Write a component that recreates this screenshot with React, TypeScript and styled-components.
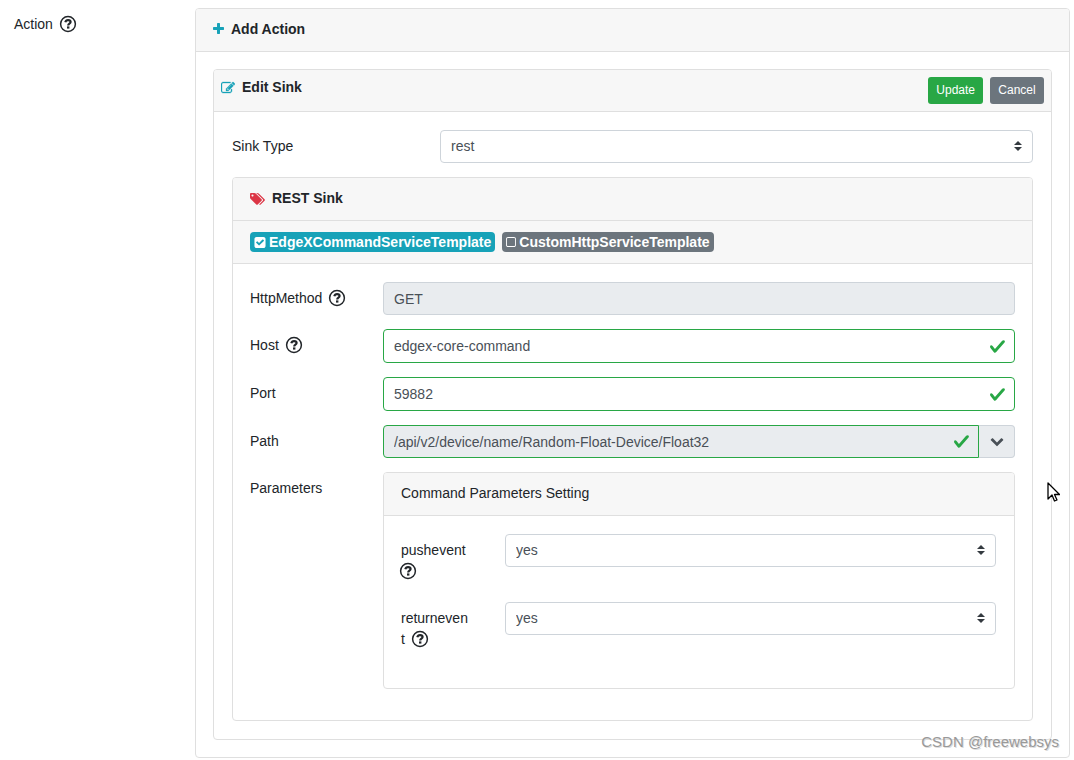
import React, { useState } from "react";
import styled, { createGlobalStyle } from "styled-components";

const GlobalStyle = createGlobalStyle`
  *, *::before, *::after { box-sizing: border-box; }
  body {
    margin: 0;
    background: #fff;
    color: #212529;
    font-family: "Liberation Sans", Arial, sans-serif;
    font-size: 14px;
    line-height: 21px;
  }
  button, input, select { font: inherit; margin: 0; }
`;

/* ---------- layout ---------- */

const Page = styled.main`
  position: relative;
  display: grid;
  grid-template-columns: 181px minmax(0, 1fr);
  align-items: start;
  padding: 8px 4px 0 14px;
`;

const Card = styled.section`
  min-width: 0;
  border: 1px solid #dfdfdf;
  border-radius: 4px;
  background: #fff;
`;

const CardHeader = styled.header<{ $compact?: boolean }>`
  display: flex;
  align-items: flex-start;
  gap: 7px;
  min-height: ${(p) => (p.$compact ? 42 : 43)}px;
  padding: ${(p) => (p.$compact ? "7px" : "10px 17px")};
  border-bottom: 1px solid #dfdfdf;
  background: #f7f7f7;

  &:first-child { border-radius: 3px 3px 0 0; }
`;

const CardTitle = styled.h2<{ $plain?: boolean }>`
  display: flex;
  align-items: center;
  gap: 7px;
  flex: 1;
  margin: 0;
  font-size: 14px;
  font-weight: ${(p) => (p.$plain ? 400 : 700)};
`;

const CardBody = styled.div<{ $pad: string }>`
  padding: ${(p) => p.$pad};
`;

const FormRow = styled.div<{ $label: number }>`
  display: grid;
  grid-template-columns: ${(p) => p.$label}px minmax(0, 1fr);
  align-items: start;
  margin-bottom: 14px;
`;

const labelBox = `
  display: block;
  padding: 6px 0;
`;

const Label = styled.label<{ $narrow?: boolean }>`
  ${labelBox}
  padding-right: ${(p) => (p.$narrow ? 34 : 0)}px;
  overflow-wrap: anywhere;
`;

const Caption = styled.div`
  ${labelBox}
`;

/* ---------- controls ---------- */

const Control = styled.div`
  position: relative;
  flex: 1;
  display: flex;
  min-width: 0;
`;

const Input = styled.input<{ $valid?: boolean; $joined?: boolean }>`
  width: 100%;
  height: ${(p) => (p.readOnly ? 33 : 34)}px;
  padding: 0 10px;
  border: 1px solid ${(p) => (p.$valid ? "#28a745" : "#ced4da")};
  border-radius: ${(p) => (p.$joined ? "4px 0 0 4px" : "4px")};
  background: ${(p) => (p.readOnly ? "#e9ecef" : "#fff")};
  color: #495057;
  outline: none;
`;

const Select = styled.select`
  appearance: none;
  width: 100%;
  height: 33px;
  padding: 0 24px 0 10px;
  border: 1px solid #ced4da;
  border-radius: 4px;
  background: #fff;
  color: #495057;
  outline: none;
`;

const Adornment = styled.svg`
  position: absolute;
  top: 0;
  margin: auto 0;
  pointer-events: none;
`;

const SelectArrows = styled(Adornment)`
  right: 11px;
  bottom: 1px;
`;

const ValidTick = styled(Adornment)`
  right: 9px;
  bottom: 0;
`;

const InputGroup = styled.div`
  display: flex;
`;

const AddonButton = styled.button`
  display: flex;
  align-items: center;
  justify-content: center;
  width: 36px;
  height: 33px;
  padding: 0;
  border: 1px solid #ced4da;
  border-left: 0;
  border-radius: 0 4px 4px 0;
  background: #e9ecef;
  color: #495057;
`;

const Button = styled.button<{ $tone: string }>`
  min-width: 54px;
  height: 27px;
  padding: 0 8px;
  border: 0;
  border-radius: 3px;
  background: ${(p) => p.$tone};
  color: #fff;
  font-size: 12px;
`;

const BadgeRow = styled.div`
  display: flex;
  align-items: center;
  gap: 7px;
  min-height: 43px;
  padding: 0 17px;
  border-bottom: 1px solid #dfdfdf;
  background: #f7f7f7;
`;

const Badge = styled.label<{ $on: boolean }>`
  position: relative;
  display: inline-flex;
  align-items: center;
  gap: 3px;
  height: 20px;
  padding: 0 4px;
  border-radius: 4px;
  background: ${(p) => (p.$on ? "#17a2b8" : "#6c757d")};
  color: #fff;
  font-weight: 700;
`;

const BadgeCheck = styled.input`
  position: absolute;
  left: 4px;
  width: 12px;
  height: 12px;
  opacity: 0;
`;

const HelpMark = styled.svg`
  width: 16px;
  height: 16px;
  margin-left: -1px;
  vertical-align: -3px;
  overflow: visible;
`;

const Watermark = styled.div`
  position: absolute;
  right: 15px;
  bottom: 6px;
  color: #999;
  font-size: 15px;
  text-shadow: 1px 1px 0 #ddd;
`;

const Cursor = styled.svg`
  position: absolute;
  top: 482px;
  right: 14px;
`;

/* ---------- icons ---------- */

const Glyph = styled.svg<{ $color?: string }>`
  flex: none;
  fill: ${(p) => p.$color ?? "currentColor"};
`;

const PlusIcon = () => (
  <Glyph $color="#17a2b8" width="11" height="13" viewBox="192 128 1408 1664" aria-hidden>
    <path d="M1600 736v192q0 40-28 68t-68 28h-416v416q0 40-28 68t-68 28h-192q-40 0-68-28t-28-68v-416h-416q-40 0-68-28t-28-68v-192q0-40 28-68t68-28h416v-416q0-40 28-68t68-28h192q40 0 68 28t28 68v416h416q40 0 68 28t28 68z" />
  </Glyph>
);

const EditIcon = () => (
  <Glyph $color="#17a2b8" width="14" height="14" viewBox="0 0 1792 1792" aria-hidden>
    <path
      stroke="#17a2b8"
      strokeWidth="40"
      d="M888 1184l116-116-152-152-116 116v56h96v96h56zm440-720q-16-16-33 1l-350 350q-17 17-1 33t33-1l350-350q17-17 1-33zm80 594v190q0 119-84.5 203.5t-203.5 84.5h-832q-119 0-203.5-84.5t-84.5-203.5v-832q0-119 84.5-203.5t203.5-84.5h832q63 0 117 25 15 7 18 23 3 17-9 29l-49 49q-14 14-32 8-23-6-45-6h-832q-66 0-113 47t-47 113v832q0 66 47 113t113 47h832q66 0 113-47t47-113v-126q0-13 9-22l64-64q15-15 35-7t20 29zm-96-738l288 288-672 672h-288v-288zm444 132l-92 92-288-288 92-92q28-28 68-28t68 28l152 152q28 28 28 68t-28 68z"
    />
  </Glyph>
);

const TagsIcon = () => (
  <Glyph $color="#dc3545" width="15" height="14" viewBox="128 0 1920 1792" aria-hidden>
    <path d="M576 448q0-53-37.5-90.5t-90.5-37.5-90.5 37.5-37.5 90.5 37.5 90.5 90.5 37.5 90.5-37.5 37.5-90.5zm1067 576q0 53-37 90l-491 492q-39 37-91 37-53 0-90-37l-715-716q-38-37-64.5-101t-26.5-117v-416q0-52 38-90t90-38h416q53 0 117 26.5t102 64.5l715 714q37 39 37 91zm384 0q0 53-37 90l-491 492q-39 37-91 37-36 0-59-14t-53-45l470-470q37-37 37-90 0-52-37-91l-715-714q-38-38-102-64.5t-117-26.5h224q53 0 117 26.5t102 64.5l715 714q37 39 37 91z" />
  </Glyph>
);

const CheckedIcon = () => (
  <Glyph width="12" height="12" viewBox="64 0 1664 1664" aria-hidden>
    <path d="M813 1299l614-614q19-19 19-45t-19-45l-102-102q-19-19-45-19t-45 19l-467 467-211-211q-19-19-45-19t-45 19l-102 102q-19 19-19 45t19 45l358 358q19 19 45 19t45-19zm851-883v960q0 119-84.5 203.5t-203.5 84.5h-960q-119 0-203.5-84.5t-84.5-203.5v-960q0-119 84.5-203.5t203.5-84.5h960q119 0 203.5 84.5t84.5 203.5z" />
  </Glyph>
);

const UncheckedIcon = () => (
  <Glyph width="10" height="10" viewBox="192 128 1408 1408" aria-hidden>
    <path d="M1312 256h-832q-66 0-113 47t-47 113v832q0 66 47 113t113 47h832q66 0 113-47t47-113v-832q0-66-47-113t-113-47zm288 160v832q0 119-84.5 203.5t-203.5 84.5h-832q-119 0-203.5-84.5t-84.5-203.5v-832q0-119 84.5-203.5t203.5-84.5h832q119 0 203.5 84.5t84.5 203.5z" />
  </Glyph>
);

const ChevronIcon = () => (
  <Glyph width="14" height="14" viewBox="0 128 1792 1792" aria-hidden>
    <path d="M1683 808l-742 741q-19 19-45 19t-45-19l-742-741q-19-19-19-45.5t19-45.5l166-165q19-19 45-19t45 19l531 531 531-531q19-19 45-19t45 19l166 165q19 19 19 45.5t-19 45.5z" />
  </Glyph>
);

const ValidMark = () => (
  <ValidTick width="17" height="17" viewBox="0 0 8 8" aria-hidden>
    <path
      fill="#28a745"
      d="M2.3 6.73L.6 4.53c-.4-1.04.46-1.4 1.1-.8l1.1 1.4 3.4-3.8c.6-.63 1.6-.27 1.2.7l-4 4.6c-.43.5-.8.4-1.1.1z"
    />
  </ValidTick>
);

/* ---------- composed parts ---------- */

const Help = () => (
  <>
    {"\u00a0 "}
    <HelpMark viewBox="0 0 16 16" fill="none" stroke="#212529" aria-hidden>
      <circle cx="8" cy="8" r="7.4" strokeWidth="1.5" />
      <path
        d="M5.3 6.300C5.700 4.700 6.700 4.100 8.100 4.100c1.500 0 2.500.8 2.500 2 0 1.600-2.400 1.600-2.400 3.300"
        strokeWidth="2.200"
      />
      <path d="M8.200 10.400v2.200" strokeWidth="2.400" />
    </HelpMark>
  </>
);

function SelectBox({ id, options }: { id: string; options: string[] }) {
  return (
    <Control>
      <Select id={id} defaultValue={options[0]}>
        {options.map((o) => (
          <option key={o}>{o}</option>
        ))}
      </Select>
      <SelectArrows width="8" height="10" viewBox="0 0 4 5" aria-hidden>
        <path fill="#343a40" d="M2 0L0 2h4zm0 5L0 3h4z" />
      </SelectArrows>
    </Control>
  );
}

function TemplateBadge({ text, initial }: { text: string; initial: boolean }) {
  const [on, setOn] = useState(initial);
  return (
    <Badge $on={on}>
      <BadgeCheck type="checkbox" checked={on} onChange={() => setOn(!on)} />
      {on ? <CheckedIcon /> : <UncheckedIcon />}
      {text}
    </Badge>
  );
}

function CommandParameters() {
  return (
    <Card>
      <CardHeader>
        <CardTitle $plain>Command Parameters Setting</CardTitle>
      </CardHeader>
      <CardBody $pad="18px 18px 18px 17px">
        {["pushevent", "returnevent"].map((name) => (
          <FormRow key={name} $label={104}>
            <Label htmlFor={name} $narrow>
              {name}
              <Help />
            </Label>
            <SelectBox id={name} options={["yes", "no"]} />
          </FormRow>
        ))}
      </CardBody>
    </Card>
  );
}

function RestSink() {
  return (
    <Card>
      <CardHeader>
        <CardTitle>
          <TagsIcon />
          REST Sink
        </CardTitle>
      </CardHeader>
      <BadgeRow>
        <TemplateBadge text="EdgeXCommandServiceTemplate" initial />
        <TemplateBadge text="CustomHttpServiceTemplate" initial={false} />
      </BadgeRow>
      <CardBody $pad="18px 17px 17px">
        <FormRow $label={133}>
          <Label htmlFor="method">
            HttpMethod
            <Help />
          </Label>
          <Input id="method" defaultValue="GET" readOnly />
        </FormRow>
        <FormRow $label={133}>
          <Label htmlFor="host">
            Host
            <Help />
          </Label>
          <Control>
            <Input id="host" defaultValue="edgex-core-command" $valid />
            <ValidMark />
          </Control>
        </FormRow>
        <FormRow $label={133}>
          <Label htmlFor="port">Port</Label>
          <Control>
            <Input id="port" defaultValue="59882" $valid />
            <ValidMark />
          </Control>
        </FormRow>
        <FormRow $label={133}>
          <Label htmlFor="path">Path</Label>
          <InputGroup>
            <Control>
              <Input
                id="path"
                defaultValue="/api/v2/device/name/Random-Float-Device/Float32"
                readOnly
                $valid
                $joined
              />
              <ValidMark />
            </Control>
            <AddonButton type="button" aria-label="Choose path">
              <ChevronIcon />
            </AddonButton>
          </InputGroup>
        </FormRow>
        <FormRow $label={133}>
          <Caption>Parameters</Caption>
          <CommandParameters />
        </FormRow>
      </CardBody>
    </Card>
  );
}

export default function App() {
  return (
    <>
      <GlobalStyle />
      <Page>
        <Caption>
          Action
          <Help />
        </Caption>
        <Card>
          <CardHeader>
            <CardTitle>
              <PlusIcon />
              Add Action
            </CardTitle>
          </CardHeader>
          <CardBody $pad="17px">
            <Card>
              <CardHeader $compact>
                <CardTitle>
                  <EditIcon />
                  Edit Sink
                </CardTitle>
                <Button type="button" $tone="#28a745">
                  Update
                </Button>
                <Button type="button" $tone="#6c757d">
                  Cancel
                </Button>
              </CardHeader>
              <CardBody $pad="18px">
                <FormRow $label={208}>
                  <Label htmlFor="sink-type">Sink Type</Label>
                  <SelectBox id="sink-type" options={["rest", "mqtt", "edgex"]} />
                </FormRow>
                <RestSink />
              </CardBody>
            </Card>
          </CardBody>
        </Card>
        <Watermark>CSDN @freewebsys</Watermark>
        <Cursor width="13" height="20" viewBox="0 0 13 20" aria-hidden>
          <path
            d="M1 1v16l4-4 2.500 6 2.500-1-2.500-5.500h5z"
            fill="#fff"
            stroke="#000"
            strokeWidth="1.300"
            strokeLinejoin="round"
          />
        </Cursor>
      </Page>
    </>
  );
}
